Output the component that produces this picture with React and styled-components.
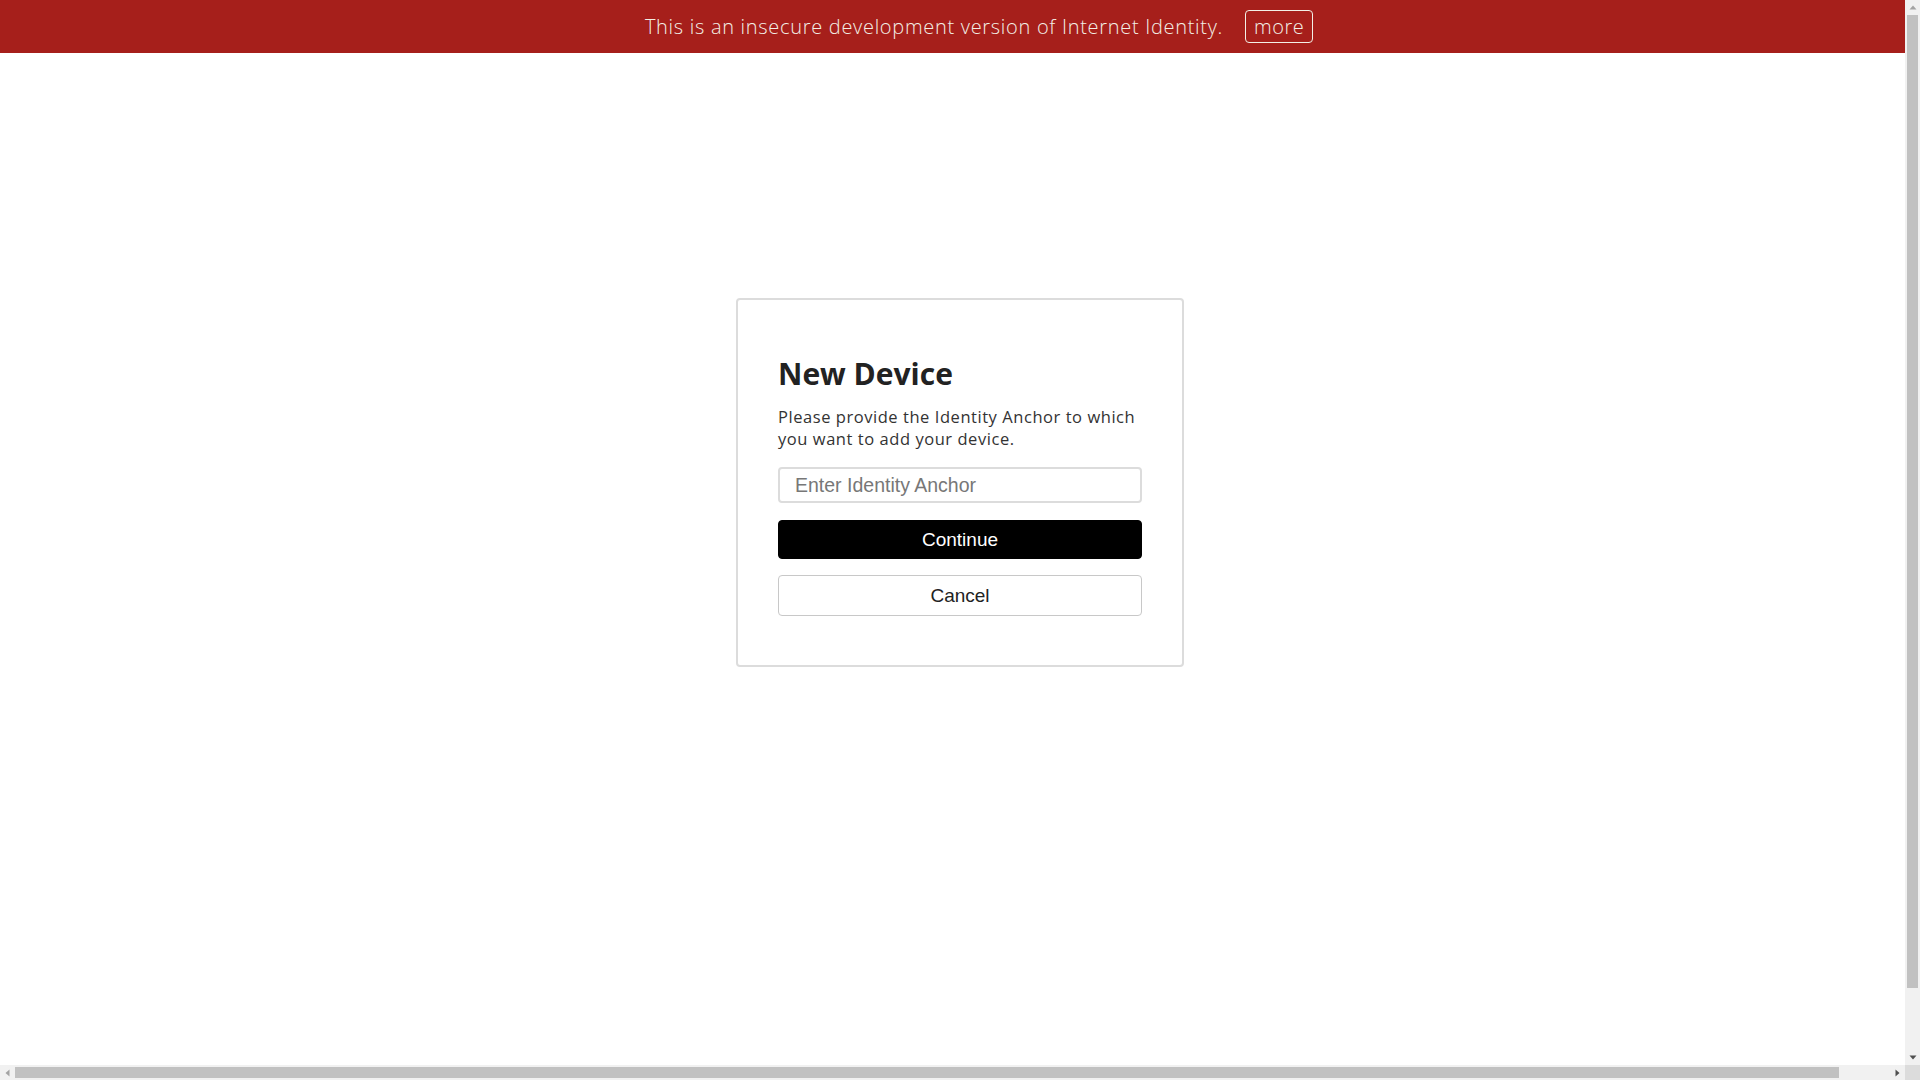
import styled, { createGlobalStyle } from "styled-components";

const GlobalStyle = createGlobalStyle`
  html, body {
    margin: 0;
    padding: 0;
    background: #fff;
    overflow: hidden;
  }
  body {
    font-family: "Open Sans", "Liberation Sans", sans-serif;
  }
`;

const Page = styled.div`
  width: 1958px;
  min-height: 1133px;
`;

const Banner = styled.div`
  height: 53px;
  background: #a61f1b;
  color: #f3efe6;
  display: flex;
  align-items: center;
  justify-content: center;
  gap: 22px;
  font-family: "Open Sans", sans-serif;
  font-size: 20px;
  letter-spacing: 0.7px;
  font-weight: 300;
`;

const MoreButton = styled.button`
  height: 33px;
  width: 68px;
  padding: 0;
  margin-top: -1px;
  background: transparent;
  color: #f3efe6;
  border: 1px solid #f3efe6;
  border-radius: 4px;
  font-family: "Open Sans", sans-serif;
  font-size: 20px;
  letter-spacing: 0.5px;
  font-weight: 300;
`;

const Main = styled.main`
  width: 1920px;
  display: flex;
  justify-content: center;
  padding-top: 245px;
`;

const Card = styled.section`
  box-sizing: border-box;
  width: 448px;
  padding: 56px 40px 49px;
  border: 2px solid #dcdcdc;
  border-radius: 4px;
  display: flex;
  flex-direction: column;
`;

const Title = styled.h1`
  margin: 0 0 14px;
  font-family: "Open Sans", sans-serif;
  font-size: 30px;
  line-height: 36px;
  font-weight: 700;
  color: #222;
`;

const Text = styled.p`
  margin: 0 0 17px;
  font-family: "Open Sans", sans-serif;
  font-size: 16.5px;
  letter-spacing: 0.55px;
  line-height: 22px;
  color: #333;
`;

const Input = styled.input`
  box-sizing: border-box;
  height: 36px;
  width: 100%;
  padding: 0 15px;
  border: 2px solid #dcdcdc;
  border-radius: 4px;
  font-family: "Liberation Sans", Arial, sans-serif;
  font-size: 19.5px;
  color: #222;
  &::placeholder {
    color: #777;
  }
`;

const Button = styled.button`
  box-sizing: border-box;
  width: 100%;
  height: ${(p) => (p.$primary ? "39px" : "41px")};
  margin-top: ${(p) => (p.$primary ? "17px" : "16px")};
  border-radius: 4px;
  border: 1px solid ${(p) => (p.$primary ? "#000" : "#c8c8c8")};
  background: ${(p) => (p.$primary ? "#000" : "#fff")};
  color: ${(p) => (p.$primary ? "#fff" : "#222")};
  font-family: "Liberation Sans", Arial, sans-serif;
  font-size: 19px;
`;

/* browser scrollbars, as seen in the capture */
const VTrack = styled.div`
  position: fixed;
  top: 0;
  right: 0;
  width: 15px;
  height: 1065px;
  background: #f1f1f1;
  display: flex;
  flex-direction: column;
  align-items: center;
`;

const HTrack = styled.div`
  position: fixed;
  left: 0;
  bottom: 0;
  width: 1905px;
  height: 15px;
  background: #f1f1f1;
  display: flex;
  align-items: center;
`;

const Corner = styled.div`
  position: fixed;
  right: 0;
  bottom: 0;
  width: 15px;
  height: 15px;
  background: #dcdcdc;
`;

const Arrow = styled.div`
  width: 15px;
  height: 15px;
  flex: none;
  display: flex;
  align-items: center;
  justify-content: center;
`;

const Thumb = styled.div`
  background: #c1c1c1;
  flex: none;
  ${(p) => (p.$vertical ? "width: 11px; height: 973px;" : "height: 11px; width: 1824px;")}
`;

const Spacer = styled.div`
  flex: 1;
`;

const Tri = ({ dir, color }) => {
  const pts = {
    up: "0.5,4.5 7.5,4.5 4,0.5",
    down: "0.5,0.5 7.5,0.5 4,4.5",
    left: "4.5,0.5 4.5,7.5 0.5,4",
    right: "0.5,0.5 0.5,7.5 4.5,4",
  }[dir];
  const vert = dir === "up" || dir === "down";
  return (
    <svg width={vert ? 8 : 5} height={vert ? 5 : 8} viewBox={vert ? "0 0 8 5" : "0 0 5 8"}>
      <polygon points={pts} fill={color} />
    </svg>
  );
};

export default function App() {
  return (
    <>
      <GlobalStyle />
      <Page>
        <Banner>
          <span>This is an insecure development version of Internet Identity.</span>
          <MoreButton>more</MoreButton>
        </Banner>
        <Main>
          <Card>
            <Title>New Device</Title>
            <Text>Please provide the Identity Anchor to which you want to add your device.</Text>
            <Input placeholder="Enter Identity Anchor" />
            <Button $primary>Continue</Button>
            <Button>Cancel</Button>
          </Card>
        </Main>
      </Page>
      <VTrack>
        <Arrow><Tri dir="up" color="#a3a3a3" /></Arrow>
        <Thumb $vertical />
        <Spacer />
        <Arrow><Tri dir="down" color="#505050" /></Arrow>
      </VTrack>
      <HTrack>
        <Arrow><Tri dir="left" color="#a3a3a3" /></Arrow>
        <Thumb />
        <Spacer />
        <Arrow><Tri dir="right" color="#505050" /></Arrow>
      </HTrack>
      <Corner />
    </>
  );
}
